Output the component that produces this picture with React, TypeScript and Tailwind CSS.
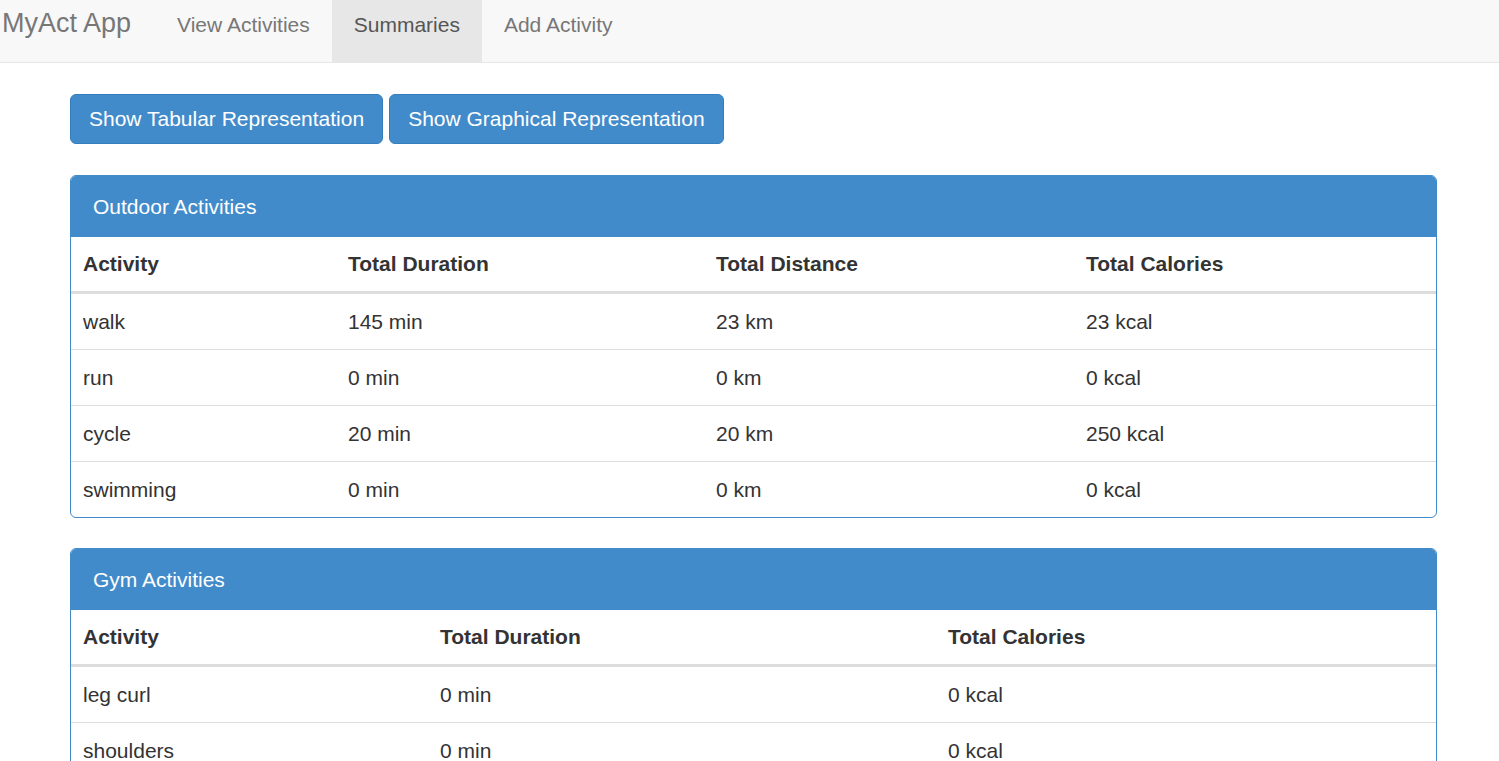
import React from 'react';

type Row = string[];

const outdoorCols = ['Activity', 'Total Duration', 'Total Distance', 'Total Calories'];
const outdoorWidths = ['w-[265px]', 'w-[368px]', 'w-[370px]', ''];
const outdoorRows: Row[] = [
  ['walk', '145 min', '23 km', '23 kcal'],
  ['run', '0 min', '0 km', '0 kcal'],
  ['cycle', '20 min', '20 km', '250 kcal'],
  ['swimming', '0 min', '0 km', '0 kcal'],
];

const gymCols = ['Activity', 'Total Duration', 'Total Calories'];
const gymWidths = ['w-[357px]', 'w-[508px]', ''];
const gymRows: Row[] = [
  ['leg curl', '0 min', '0 kcal'],
  ['shoulders', '0 min', '0 kcal'],
];

const Panel: React.FC<{ title: string; cols: string[]; widths: string[]; rows: Row[] }> = ({
  title,
  cols,
  widths,
  rows,
}) => (
  <div className="border border-[#428bca] rounded-[6px] overflow-hidden bg-white">
    <div className="bg-[#428bca] text-white px-[22px] py-[15px] leading-[31px] text-[21px]">{title}</div>
    <table className="w-full border-collapse text-[21px] text-[#333]">
      <thead>
        <tr className="border-b-[3px] border-[#ddd]">
          {cols.map((c, i) => (
            <th key={c} className={`text-left font-bold px-[12px] pt-[12px] pb-[12px] leading-[30px] ${widths[i]}`}>
              {c}
            </th>
          ))}
        </tr>
      </thead>
      <tbody>
        {rows.map((r, ri) => (
          <tr key={ri} className={ri > 0 ? 'border-t border-[#ddd]' : ''}>
            {r.map((v, i) => (
              <td key={i} className="px-[12px] pt-[13px] pb-[12px] leading-[30px]">
                {v}
              </td>
            ))}
          </tr>
        ))}
      </tbody>
    </table>
  </div>
);

const App: React.FC = () => {
  return (
    <div className="min-h-screen bg-white font-['Liberation_Sans',Arial,sans-serif] text-[#333]">
      {/* Navbar */}
      <nav className="h-[63px] bg-[#f8f8f8] border-b border-[#e7e7e7] flex items-start">
        <div className="pl-[2px] pr-[24px] pt-[8px] text-[27px] leading-[30px] text-[#777]">MyAct App</div>
        <div className="flex">
          <a className="h-[62px] px-[22px] pt-[10px] leading-[30px] text-[21px] text-[#777]">View Activities</a>
          <a className="h-[62px] px-[22px] pt-[10px] leading-[30px] text-[21px] text-[#555] bg-[#e7e7e7]">Summaries</a>
          <a className="h-[62px] px-[22px] pt-[10px] leading-[30px] text-[21px] text-[#777]">Add Activity</a>
        </div>
      </nav>

      <div className="pl-[70px] pr-[62px] pt-[31px]">
        <div className="flex gap-[6px]">
          <button className="bg-[#428bca] border border-[#357ebd] text-white rounded-[6px] px-[18px] py-[9px] leading-[30px] text-[21px]">
            Show Tabular Representation
          </button>
          <button className="bg-[#428bca] border border-[#357ebd] text-white rounded-[6px] px-[18px] py-[9px] leading-[30px] text-[21px]">
            Show Graphical Representation
          </button>
        </div>

        <div className="mt-[31px] flex flex-col gap-[30px]">
          <Panel title="Outdoor Activities" cols={outdoorCols} widths={outdoorWidths} rows={outdoorRows} />
          <Panel title="Gym Activities" cols={gymCols} widths={gymWidths} rows={gymRows} />
        </div>
      </div>
    </div>
  );
};

export default App;
